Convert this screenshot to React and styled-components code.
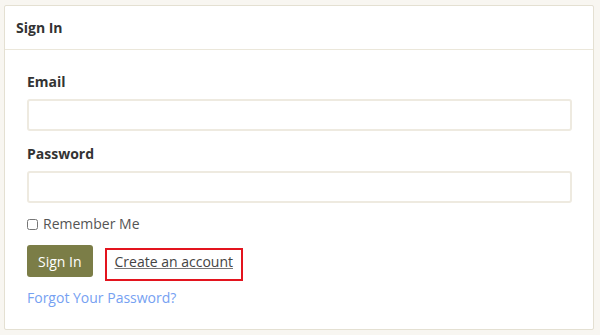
import styled, { createGlobalStyle } from "styled-components";

const GlobalStyle = createGlobalStyle`
  html, body {
    margin: 0;
    padding: 0;
    background: #f8f6f1;
  }
  body {
    font-family: "Open Sans", "Noto Sans", sans-serif;
    font-size: 14px;
    color: #3b3b3b;
  }
  * { box-sizing: border-box; }
`;

const Page = styled.div`
  padding: 5px 6px 5px 4px;
`;

const Card = styled.div`
  background: #fff;
  border: 1px solid #e4e0d2;
  border-radius: 2px;
  height: 325px;
`;

const Header = styled.div`
  height: 44px;
  display: flex;
  align-items: center;
  padding: 0 11px;
  border-bottom: 1px solid #ebe7da;
  font-weight: 700;
  font-size: 14px;
  color: #333;
`;

const Body = styled.form`
  padding: 22px 21px 0 22px;
  display: flex;
  flex-direction: column;
`;

const Label = styled.label`
  font-weight: 700;
  font-size: 14px;
  color: #333;
  line-height: 20px;
  margin-bottom: 7px;
`;

const Input = styled.input`
  height: 32px;
  width: 100%;
  border: 2px solid #eeeae0;
  border-radius: 3px;
  margin-bottom: ${p => p.$gap}px;
  outline: none;
  background: #fff;
`;

const CheckRow = styled.label`
  display: flex;
  align-items: center;
  gap: 5px;
  color: #555;
  font-size: 14px;
  line-height: 20px;
`;

const Check = styled.input`
  margin: 0;
  width: 11px;
  height: 11px;
  accent-color: #888;
`;

const Actions = styled.div`
  display: flex;
  align-items: flex-start;
  gap: 12px;
  margin-top: 11px;
`;

const Button = styled.button`
  height: 32px;
  padding: 0 11px;
  background: #7b7d47;
  color: #fff;
  border: none;
  border-radius: 3px;
  font-family: inherit;
  font-size: 14px;
`;

const Highlight = styled.div`
  border: 2px solid #e3141e;
  padding: 2px 8px 7px 8px;
  margin-top: 3px;
  line-height: 20px;
`;

const LinkDark = styled.a`
  color: #444;
  text-decoration: underline;
  text-decoration-color: #777;
  font-size: 14px;
`;

const LinkBlue = styled.a`
  color: #76a1f2;
  text-decoration: none;
  font-size: 14px;
  margin-top: 7px;
  line-height: 20px;
  align-self: flex-start;
`;

export default function App() {
  return (
    <>
      <GlobalStyle />
      <Page>
        <Card>
          <Header>Sign In</Header>
          <Body onSubmit={e => e.preventDefault()}>
            <Label>Email</Label>
            <Input type="email" $gap={13} />
            <Label>Password</Label>
            <Input type="password" $gap={11} />
            <CheckRow>
              <Check type="checkbox" />
              Remember Me
            </CheckRow>
            <Actions>
              <Button type="submit">Sign In</Button>
              <Highlight>
                <LinkDark href="#">Create an account</LinkDark>
              </Highlight>
            </Actions>
            <LinkBlue href="#">Forgot Your Password?</LinkBlue>
          </Body>
        </Card>
      </Page>
    </>
  );
}
